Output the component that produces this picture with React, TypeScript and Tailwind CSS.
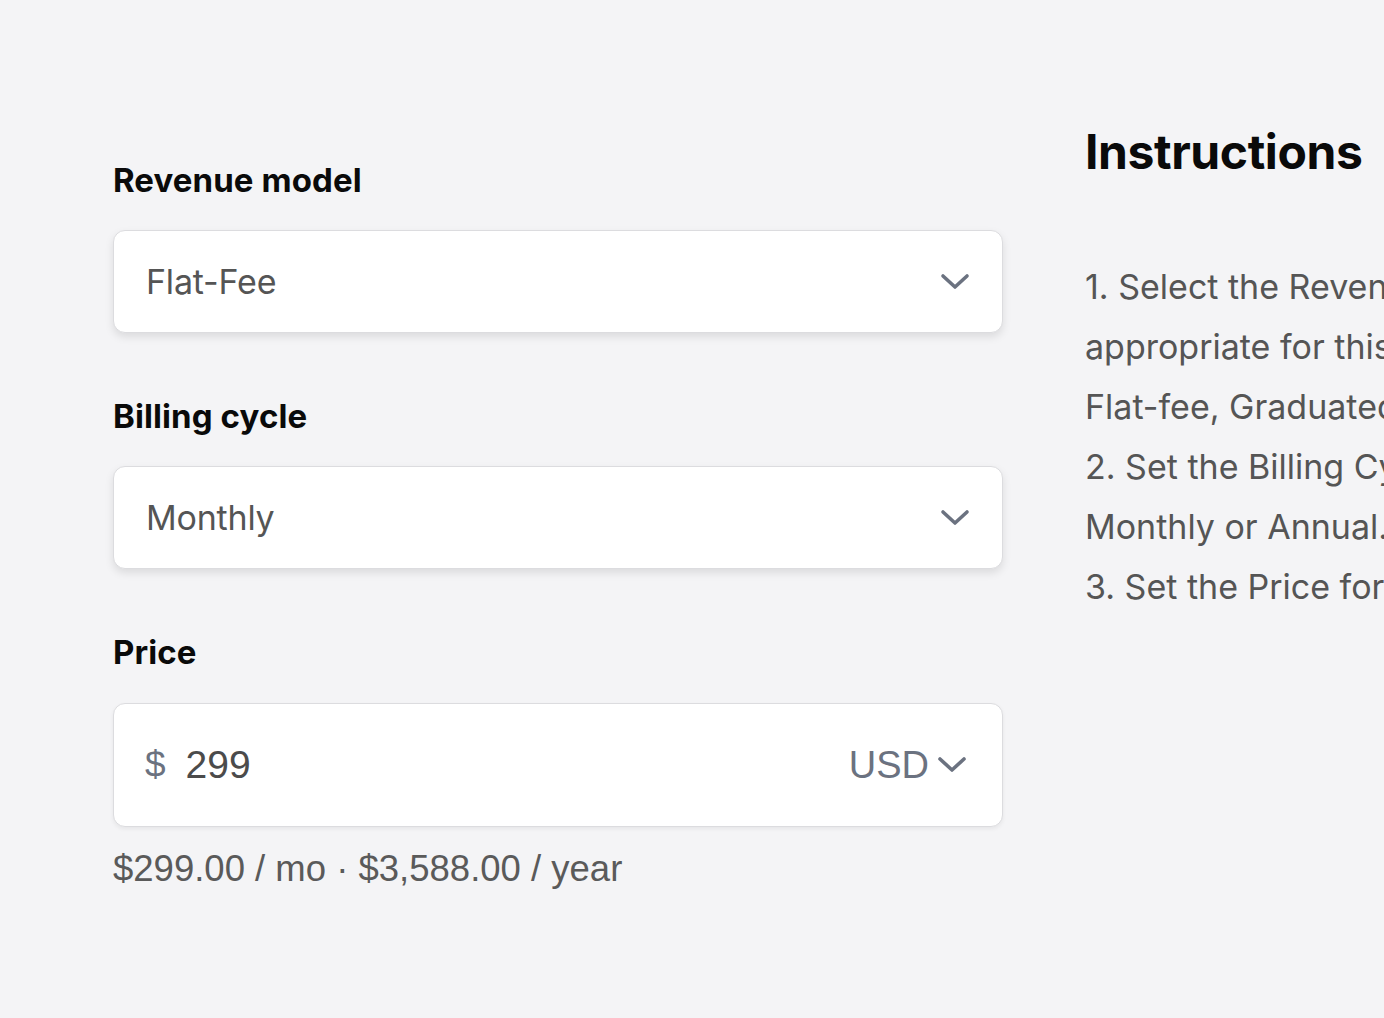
const sans = "font-['Inter',sans-serif]";
const system = "font-['Liberation_Sans',Arial,sans-serif]";

function Chevron() {
  return (
    <svg width="30" height="18" viewBox="0 0 30 18" fill="none" className="text-[#6b7280]">
      <polyline points="3,3 15,14 27,3" stroke="currentColor" strokeWidth="3.6" strokeLinecap="round" strokeLinejoin="round" />
    </svg>
  );
}

function Label({ children }: { children: React.ReactNode }) {
  return <div className={`${sans} text-[33px] leading-[40px] font-bold text-[#0a0a0a] tracking-[0.1px]`}>{children}</div>;
}

function SelectBox({ value }: { value: string }) {
  return (
    <div className="mt-[30px] h-[103px] rounded-[12px] border border-[#dcdcdf] bg-white shadow-[0_4px_8px_rgba(0,0,0,0.10)] pl-[32px] pr-[32px] flex items-center justify-between">
      <span className={`${sans} text-[34px] text-[#555555] tracking-[-0.2px]`}>{value}</span>
      <Chevron />
    </div>
  );
}

export default function App() {
  return (
    <div className="w-[1384px] h-[1018px] overflow-hidden bg-[#f4f4f6]">
      <div className="flex gap-[82px] pl-[113px]">
        <div className="w-[890px] shrink-0 pt-[160px]">
          <Label>Revenue model</Label>
          <SelectBox value="Flat-Fee" />

          <div className="mt-[63px]">
            <Label>Billing cycle</Label>
          </div>
          <SelectBox value="Monthly" />

          <div className="mt-[63px]">
            <Label>Price</Label>
          </div>
          <div className="mt-[31px] h-[124px] rounded-[12px] border border-[#dcdcdf] bg-white shadow-[0_2px_4px_rgba(0,0,0,0.06)] pl-[31px] pr-[35px] flex items-center">
            <span className={`${system} text-[37px] text-[#6b7280]`}>$</span>
            <span className={`${system} ml-[20px] text-[39px] text-[#4b4b4b]`}>299</span>
            <div className="ml-auto flex items-center gap-[8px]">
              <span className={`${system} text-[38px] text-[#6b7280]`}>USD</span>
              <Chevron />
            </div>
          </div>
          <div className={`${system} mt-[20px] text-[36.5px] leading-[44px] text-[#5a5a5a]`}>
            $299.00 / mo · $3,588.00 / year
          </div>
        </div>

        <div className="w-[620px] shrink-0 pt-[124px]">
          <h2 className={`${sans} text-[48px] leading-[56px] font-bold text-[#0a0a0a] tracking-[-0.4px]`}>Instructions</h2>
          <div className={`${sans} mt-[77px] text-[34px] leading-[60px] text-[#555555] whitespace-nowrap`}>
            <p>1. Select the Revenue model</p>
            <p>appropriate for this product:</p>
            <p>Flat-fee, Graduated or Volume.</p>
            <p>2. Set the Billing Cycle:</p>
            <p>Monthly or Annual.</p>
            <p>3. Set the Price for the plan.</p>
          </div>
        </div>
      </div>
    </div>
  );
}
